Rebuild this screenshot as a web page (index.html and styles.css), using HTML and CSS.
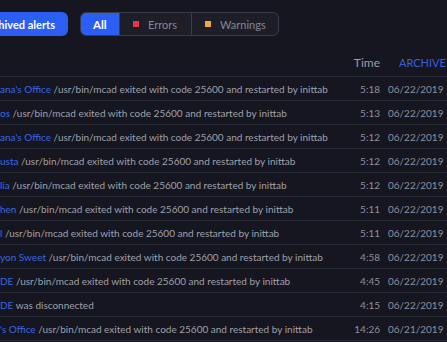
FILE: index.html
```html
<!DOCTYPE html>
<html>
<head>
<meta charset="utf-8">
<title>Alerts</title>
<link rel="stylesheet" href="styles.css">
</head>
<body>
<div class="alerts">
    <div class="toolbar">
        <div class="btn-archived"><span>Show archived alerts</span></div>
        <div class="tabs">
            <div class="tab active">All</div>
            <div class="tab errors"><i class="dot red"></i>Errors</div>
            <div class="tab warnings"><i class="dot yellow"></i>Warnings</div>
        </div>
    </div>

    <div class="list">
        <div class="row head">
            <div class="msg"></div>
            <div class="time">Time</div>
            <div class="date"><span class="archive">ARCHIVE</span></div>
        </div>
        <div class="row"><div class="msg"><a>ana's Office</a> /usr/bin/mcad exited with code 25600 and restarted by inittab</div><div class="time">5:18</div><div class="date">06/22/2019</div></div>
        <div class="row"><div class="msg"><a>os</a> /usr/bin/mcad exited with code 25600 and restarted by inittab</div><div class="time">5:13</div><div class="date">06/22/2019</div></div>
        <div class="row"><div class="msg"><a>ana's Office</a> /usr/bin/mcad exited with code 25600 and restarted by inittab</div><div class="time">5:12</div><div class="date">06/22/2019</div></div>
        <div class="row"><div class="msg"><a>usta</a> /usr/bin/mcad exited with code 25600 and restarted by inittab</div><div class="time">5:12</div><div class="date">06/22/2019</div></div>
        <div class="row"><div class="msg"><a>lia</a> /usr/bin/mcad exited with code 25600 and restarted by inittab</div><div class="time">5:12</div><div class="date">06/22/2019</div></div>
        <div class="row"><div class="msg"><a>hen</a> /usr/bin/mcad exited with code 25600 and restarted by inittab</div><div class="time">5:11</div><div class="date">06/22/2019</div></div>
        <div class="row"><div class="msg"><a>l</a> /usr/bin/mcad exited with code 25600 and restarted by inittab</div><div class="time">5:11</div><div class="date">06/22/2019</div></div>
        <div class="row"><div class="msg"><a>yon Sweet</a> /usr/bin/mcad exited with code 25600 and restarted by inittab</div><div class="time">4:58</div><div class="date">06/22/2019</div></div>
        <div class="row"><div class="msg"><a>DE</a> /usr/bin/mcad exited with code 25600 and restarted by inittab</div><div class="time">4:45</div><div class="date">06/22/2019</div></div>
        <div class="row"><div class="msg"><a>DE</a> was disconnected</div><div class="time">4:15</div><div class="date">06/22/2019</div></div>
        <div class="row"><div class="msg"><a>'s Office</a> /usr/bin/mcad exited with code 25600 and restarted by inittab</div><div class="time">14:26</div><div class="date">06/21/2019</div></div>
    </div>
</div>
</body>
</html>
```

FILE: styles.css
```css
html, body{
	margin:0;
	background:#15161f;
	overflow:hidden;
}
.alerts{
	width:508px;
	font-family:Lato, "Open Sans", sans-serif;
	color:#9fa1ad;
}

/* top bar: archived button + filter tabs */
.toolbar{
	display:flex;
	gap:12px;
	padding-top:12px;
	height:24px;
}
.btn-archived{
	width:68px;
	height:24px;
	display:flex;
	justify-content:flex-end;
	align-items:center;
	padding-right:13px;
	box-sizing:border-box;
	overflow:hidden;
	white-space:nowrap;
	border-radius:0 6px 6px 0;
	background:#2b5ef3;
	color:#fff;
	font-size:11px;
	font-weight:bold;
}
.btn-archived span{ flex:none; }

.tabs{
	display:flex;
	height:24px;
	box-sizing:border-box;
	border:1px solid #393b47;
	border-radius:6px;
	background:#1d1e28;
	overflow:hidden;
	font-size:11px;
	color:#858794;
}
.tab{
	display:flex;
	align-items:center;
	padding-left:13px;
	box-sizing:border-box;
	border-left:1px solid #393b47;
}
.tab.active{
	width:38px;
	padding-left:12px;
	border-left:0;
	background:#2b5ef3;
	color:#fff;
	font-weight:bold;
	font-size:11.5px;
}
.tab.errors{ width:72px; }
.tab.warnings{ width:87px; }
.dot{
	width:6px;
	height:6px;
	margin-right:9px;
}
.dot.red{ background:#e2374b; }
.dot.yellow{ background:#f0aa3c; }

/* list */
.list{ margin-top:13px; }
.row{
	display:grid;
	grid-template-columns:1fr 40px 62px 50px;
	column-gap:8px;
	height:23px;
	align-items:center;
	border-bottom:1px solid #292b36;
	font-size:10px;
	white-space:nowrap;
}
.row.head{
	height:27px;
	font-size:12px;
	color:#9b9da8;
}
.msg{ overflow:hidden; }
.msg a{ color:#3a66e2; }
.time{ text-align:right; color:#8f919c; }
.date{ color:#8f919c; }
.head .time{ color:#9b9da8; }
.archive{
	padding-left:11px;
	color:#3b5ee0;
	font-size:11px;
}
```
